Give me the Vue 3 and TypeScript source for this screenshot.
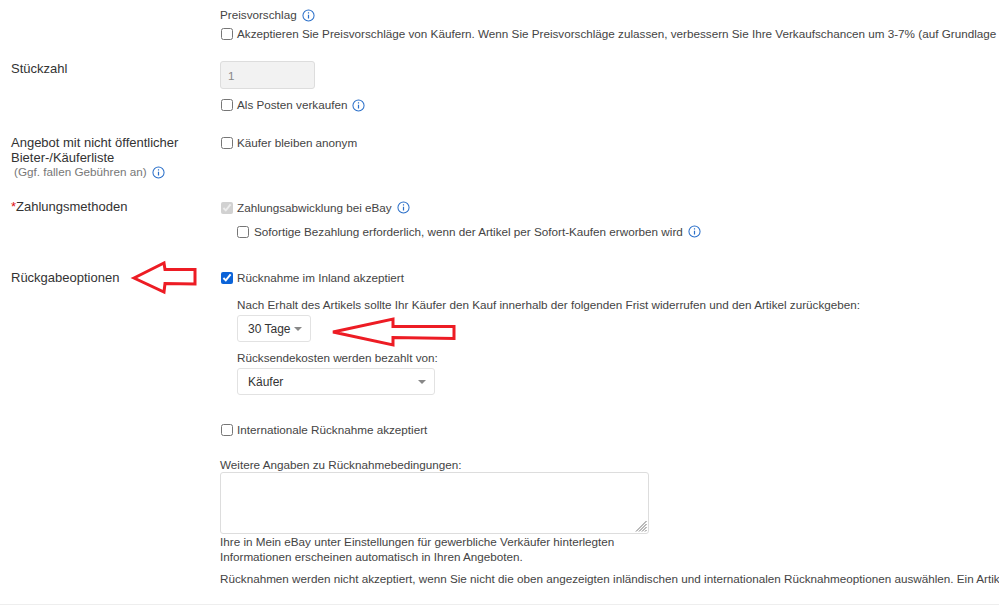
<script setup lang="ts">
const offerText =
  'Akzeptieren Sie Preisvorschläge von Käufern. Wenn Sie Preisvorschläge zulassen, verbessern Sie Ihre Verkaufschancen um 3-7% (auf Grundlage der bisherigen Verkäufe)'
const returnsNote =
  'Rücknahmen werden nicht akzeptiert, wenn Sie nicht die oben angezeigten inländischen und internationalen Rücknahmeoptionen auswählen. Ein Artikel kann dennoch zurückgegeben werden'
</script>

<template>
  <div class="page">
    <section class="row row-offer">
      <div class="label"></div>
      <div class="field">
        <div class="line small-head">
          <span>Preisvorschlag</span>
          <svg class="info" viewBox="0 0 14 14"><circle cx="7" cy="7" r="6" /><path d="M7 6.2v4M7 3.4v1.4" /></svg>
        </div>
        <label class="check offer-check"><input type="checkbox" /><span>{{ offerText }}</span></label>
      </div>
    </section>

    <section class="row row-qty">
      <div class="label">Stückzahl</div>
      <div class="field">
        <input class="qty" type="text" value="1" disabled />
        <label class="check lot-check">
          <input type="checkbox" /><span>Als Posten verkaufen</span>
          <svg class="info" viewBox="0 0 14 14"><circle cx="7" cy="7" r="6" /><path d="M7 6.2v4M7 3.4v1.4" /></svg>
        </label>
      </div>
    </section>

    <section class="row row-private">
      <div class="label">
        Angebot mit nicht öffentlicher<br />Bieter-/Käuferliste
        <div class="fee">
          <span>(Ggf. fallen Gebühren an)</span>
          <svg class="info" viewBox="0 0 14 14"><circle cx="7" cy="7" r="6" /><path d="M7 6.2v4M7 3.4v1.4" /></svg>
        </div>
      </div>
      <div class="field">
        <label class="check"><input type="checkbox" /><span>Käufer bleiben anonym</span></label>
      </div>
    </section>

    <section class="row row-pay">
      <div class="label"><span class="req">*</span>Zahlungsmethoden</div>
      <div class="field">
        <label class="check pay-check">
          <input type="checkbox" checked disabled /><span>Zahlungsabwicklung bei eBay</span>
          <svg class="info" viewBox="0 0 14 14"><circle cx="7" cy="7" r="6" /><path d="M7 6.2v4M7 3.4v1.4" /></svg>
        </label>
        <label class="check indent instant-check">
          <input type="checkbox" /><span>Sofortige Bezahlung erforderlich, wenn der Artikel per Sofort-Kaufen erworben wird</span>
          <svg class="info" viewBox="0 0 14 14"><circle cx="7" cy="7" r="6" /><path d="M7 6.2v4M7 3.4v1.4" /></svg>
        </label>
      </div>
    </section>

    <section class="row row-returns">
      <div class="label">Rückgabeoptionen</div>
      <div class="field">
        <label class="check"><input type="checkbox" checked /><span>Rücknahme im Inland akzeptiert</span></label>
        <div class="indent-block">
          <div class="line period-label">Nach Erhalt des Artikels sollte Ihr Käufer den Kauf innerhalb der folgenden Frist widerrufen und den Artikel zurückgeben:</div>
          <div class="drop drop-days"><span>30 Tage</span><i class="caret"></i></div>
          <div class="line cost-label">Rücksendekosten werden bezahlt von:</div>
          <div class="drop drop-payer"><span>Käufer</span><i class="caret"></i></div>
        </div>
        <label class="check intl-check"><input type="checkbox" /><span>Internationale Rücknahme akzeptiert</span></label>
        <div class="line more-label">Weitere Angaben zu Rücknahmebedingungen:</div>
        <div class="more-wrap">
          <textarea class="more"></textarea>
          <svg class="grip" viewBox="0 0 12 12"><path d="M11.5 1 1 11.5M11.5 4 4 11.5M11.5 7 7 11.5M11.5 10 10 11.5" /></svg>
        </div>
        <div class="hint">Ihre in Mein eBay unter Einstellungen für gewerbliche Verkäufer hinterlegten<br />Informationen erscheinen automatisch in Ihren Angeboten.</div>
        <div class="line note">{{ returnsNote }}</div>
      </div>
    </section>

    <hr class="rule" />

    <!-- rote Pfeile aus dem Screenshot -->
    <svg class="arrows" viewBox="0 0 999 609">
      <path d="M134 278 164 263 165 269.5 195 269.5V284L165 283.5 164 292Z" />
      <path d="M333 332 393 319 393 326.5 454 326.5V338.5L393 337.5 393 345Z" />
    </svg>
  </div>
</template>

<style scoped>
.page {
  position: relative;
  width: 999px;
  height: 609px;
  overflow: hidden;
  background: #fff;
  color: #444;
  font-family: "Liberation Sans", Arial, sans-serif;
  font-size: 11.7px;
  line-height: 14px;
}
.row { display: flex; }
.label { width: 220px; flex: none; box-sizing: border-box; padding-left: 11px; font-size: 13px; line-height: 15px; color: #333; }
.field { flex: 1; min-width: 0; }
.line { white-space: nowrap; }
.check { display: flex; align-items: center; white-space: nowrap; height: 14px; }
.check input { width: 12px; height: 12px; margin: 0 4px 0 1px; flex: none; accent-color: #0b63d8; }
.info { width: 13px; height: 13px; margin-left: 5px; flex: none; }
.info circle { fill: none; stroke: #2a6fc9; stroke-width: 1.1; }
.info path { fill: none; stroke: #2a6fc9; stroke-width: 1.3; }

.row-offer { padding-top: 8px; }
.offer-check { margin-top: 5px; }
.small-head { display: flex; align-items: center; height: 14px; }

.row-qty { margin-top: 20px; }
.qty {
  display: block;
  width: 95px;
  height: 28px;
  box-sizing: border-box;
  padding: 0 7px;
  border: 1px solid #ddd;
  border-radius: 3px;
  background: #f2f2f2;
  color: #888;
  font: inherit;
}
.lot-check { margin-top: 9px; }

.row-private { margin-top: 24px; }
.row-private .label { line-height: 14.5px; }
.fee { display: flex; align-items: center; padding-left: 3px; font-size: 11.7px; color: #777; }
.row-pay { margin-top: 19px; }
.pay-check { margin-top: 2px; }
.indent { padding-left: 17px; }
.indent input { margin: 0 5px 0 0; }
.instant-check { margin-top: 10px; }

.row-returns { margin-top: 32px; }
.row-returns .label { margin-top: -1px; }
.indent-block { padding-left: 17px; }
.period-label { margin-top: 13px; }
.drop {
  display: flex;
  align-items: center;
  justify-content: space-between;
  box-sizing: border-box;
  height: 27px;
  padding: 1px 8px 0 10px;
  border: 1px solid #e2e2e2;
  border-radius: 3px;
  color: #333;
  font-size: 12px;
}
.drop-days { width: 74px; margin-top: 3px; }
.drop-payer { width: 198px; margin-top: 3px; }
.cost-label { margin-top: 9px; }
.caret { width: 0; height: 0; border-left: 4px solid transparent; border-right: 4px solid transparent; border-top: 4px solid #888; }
.intl-check { margin-top: 28px; }
.more-label { margin-top: 21px; }
.more-wrap { position: relative; width: 429px; height: 62px; }
.more {
  display: block;
  width: 100%;
  height: 100%;
  box-sizing: border-box;
  border: 1px solid #ddd;
  border-radius: 3px;
  outline: none;
  resize: none;
}
.grip { position: absolute; right: 2px; bottom: 2px; width: 12px; height: 12px; }
.grip path { fill: none; stroke: #777; stroke-width: 1; }
.hint { line-height: 15px; }
.note { margin-top: 8px; }
.rule { position: absolute; left: 0; right: 0; top: 604px; margin: 0; border: 0; border-top: 1px solid #eee; }
.req { color: #d11; }
.arrows { position: absolute; inset: 0; width: 999px; height: 609px; pointer-events: none; }
.arrows path { fill: #fff; stroke: #ed1c24; stroke-width: 3; }
</style>
